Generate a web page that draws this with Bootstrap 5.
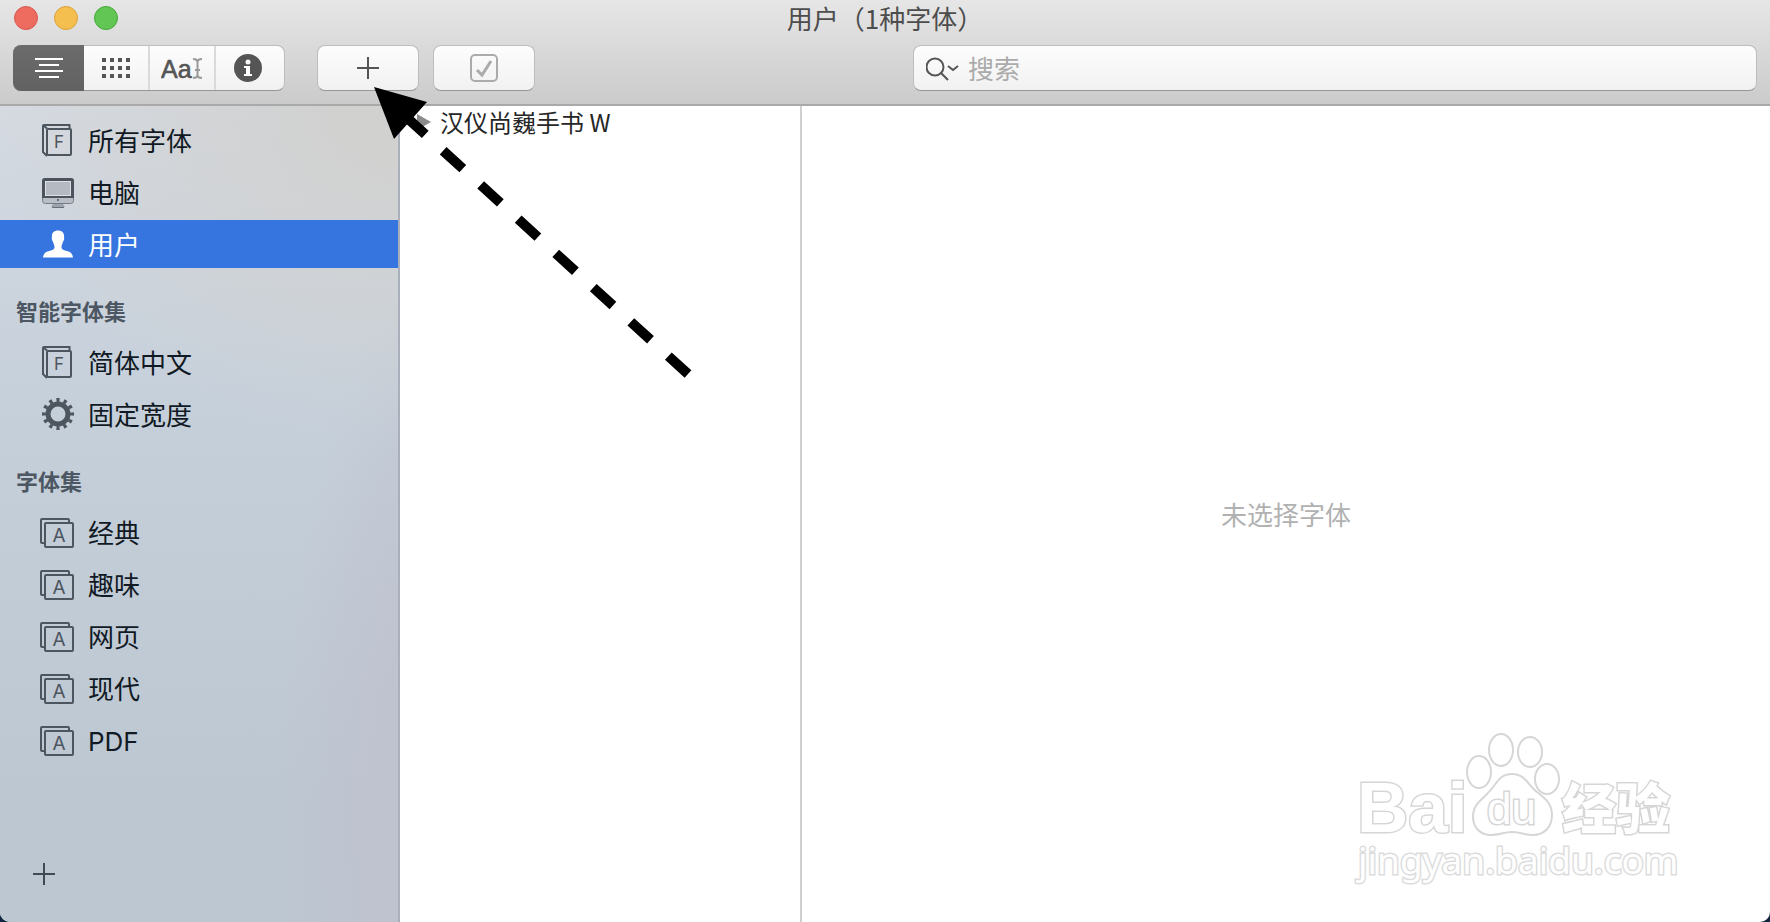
<!DOCTYPE html>
<html lang="zh-CN">
<head>
<meta charset="utf-8">
<meta name="viewport" content="width=device-width, initial-scale=1">
<title>用户（1种字体）</title>
<link href="https://cdn.jsdelivr.net/npm/bootstrap@5.3.0/dist/css/bootstrap.min.css" rel="stylesheet">
<style>
  body { background: #14263f; font-family: Inter, "Noto Sans CJK SC", sans-serif; font-size: 26px; line-height: 36px; color: #14191f; }
  svg { display: block; flex: none; }
  .window { border-radius: 0 0 10px 10px; background: #fff; }
  .titlebar { height: 106px; background: linear-gradient(#e6e6e6, #cbcbcb); border-bottom: 2px solid #a9a9a9; color: #4d4d4d; }
  .titlebar h1 { font-family: "Noto Sans CJK SC", sans-serif; font-size: 26px; line-height: 36px; }
  .lights { left: 14px; top: 6px; gap: 16px; }
  .light { width: 24px; height: 24px; border-radius: 50%; border: 1px solid; }
  .light-close { background: #ed6b5f; border-color: #d9584d; }
  .light-min { background: #f5bf4f; border-color: #dba23a; }
  .light-max { background: #61c654; border-color: #46a83a; }
  .tools { padding: 9px 13px 0; }
  .face { height: 46px; border: 1px solid #bdbdbd; border-bottom-color: #979797; border-radius: 8px; background: linear-gradient(#fdfdfd, #f1f1f1); color: #555; }
  .segments { width: 272px; }
  .segments button, .plain-btn { border: 0; padding: 0; background: none; color: inherit; }
  .segments button { width: 66px; display: flex; align-items: center; justify-content: center; border-left: 2px solid #dadada; }
  .segments button:first-child { width: 71px; margin: -1px 0 -1px -1px; border: 0; border-radius: 8px 0 0 8px; background: linear-gradient(#6b6b6b, #626262); color: #fff; }
  .segments button:nth-child(2) { width: 64px; border: 0; }
  .segments button:last-child { flex: 1; padding-right: 4px; }
  .tool { width: 102px; padding: 0; display: flex; align-items: center; justify-content: center; }
  .add-tool { margin-left: 32px; }
  .check-tool { margin-left: 14px; color: #ababab; }
  .search { margin-left: 378px; padding-left: 12px; }
  .search input { border: 0; outline: 0; background: none; padding: 2px 0 0; margin-left: 8px; height: 38px; min-width: 0; color: #4d4d4d; }
  .search input::placeholder { color: #ababab; opacity: 1; }
  .sidebar { flex: 0 0 400px; border-right: 2px solid #aab0bb; color: #111a24;
    background: radial-gradient(ellipse 100% 42% at 100% 0, #d1d1d0 15%, #d1d1d000), radial-gradient(ellipse 45% 65% at 115% 85%, #bfc1ce 25%, #bfc1ce00), linear-gradient(#d5dae1, #c6d0db 35%, #bdc7d1 85%); }
  .side-list { padding-top: 10px; gap: 4px; }
  .side-list a { height: 48px; padding-left: 40px; gap: 12px; color: inherit; }
  .side-list span, .preview span { padding-top: 3px; }
  .side-list svg { color: #4d555f; }
  .side-list .chosen { background: #3674df; color: #fff; }
  .side-list .chosen svg { color: #fff; }
  .side-head { font-size: 22px; line-height: 32px; font-weight: 700; color: #4c5763; padding: 28px 0 0 16px; margin: 0; }
  .side-add { margin: auto 0 37px 33px; color: #414a54; }
  .fonts { flex: 0 0 402px; border-right: 2px solid #cfcfcf; font-family: "Noto Sans CJK SC", sans-serif; font-size: 24px; line-height: 32px; color: #262626; }
  .fonts li { padding-left: 17px; gap: 9px; }
  .preview { color: #b1b1b1; }
  .pointer { left: 374px; top: 86px; }
  .watermark { right: 90px; bottom: 32px; }
</style>
</head>
<body>
<svg class="d-none" aria-hidden="true">
  <symbol id="book" viewBox="0 0 36 36">
    <path d="M7 34 L3 30 V4 Q3 3 4 3 H29.500 V6 M3.500 3.500 L7 6.500" fill="none" stroke="currentColor" stroke-width="2"/>
    <rect x="7" y="7" width="24" height="26" rx="1" fill="none" stroke="currentColor" stroke-width="2"/>
    <text x="19" y="26" font-size="17" text-anchor="middle" fill="currentColor">F</text>
  </symbol>
  <symbol id="set" viewBox="0 0 36 36">
    <path d="M4 29 H2 Q1 29 1 28 V6 Q1 5 2 5 H28 Q29 5 29 6 V8" fill="none" stroke="currentColor" stroke-width="2"/>
    <rect x="5" y="9" width="28" height="24" rx="1" fill="none" stroke="currentColor" stroke-width="2"/>
    <text x="19" y="28" font-size="19" text-anchor="middle" fill="currentColor">A</text>
  </symbol>
  <symbol id="plus" viewBox="0 0 22 22"><path d="M11 0V22M0 11H22" stroke="currentColor" stroke-width="2"/></symbol>
</svg>

<div class="window min-vh-100 d-flex flex-column position-relative overflow-hidden">
  <header class="titlebar position-relative">
    <div class="lights position-absolute d-flex"><span class="light light-close"></span><span class="light light-min"></span><span class="light light-max"></span></div>
    <h1 class="text-center fw-normal m-0">用户（1种字体）</h1>
    <div class="tools d-flex">
      <div class="face segments d-flex">
        <button type="button" aria-label="列表">
          <svg width="28" height="20" viewBox="0 0 28 20" stroke="currentColor" stroke-width="2"><path d="M0 1H28M4 7H24M0 13H28M4 19H24"/></svg>
        </button>
        <button type="button" aria-label="网格">
          <svg width="28" height="20" viewBox="0 0 28 20" stroke="currentColor" stroke-width="4" stroke-dasharray="4 4"><path d="M0 2H28M0 10H28M0 18H28"/></svg>
        </button>
        <button type="button" aria-label="样本">
          <svg width="42" height="26" viewBox="0 0 42 26"><text x="0" y="23" font-family="Liberation Sans, sans-serif" font-size="25" fill="currentColor" stroke="currentColor" stroke-width=".6">Aa</text><path d="M32 4Q36 4 36.500 6.500Q37 4 41 4M36.500 6V21M32 23Q36 23 36.500 20.500Q37 23 41 23M34 15H39" fill="none" stroke="#9a9a9a" stroke-width="2"/></svg>
        </button>
        <button type="button" aria-label="简介">
          <svg width="28" height="28" viewBox="0 0 28 28"><circle cx="14" cy="14" r="14" fill="currentColor"/><circle cx="14" cy="8" r="2.500" fill="#fff"/><path d="M10 12H16V20H18V22H10V20H12V14H10Z" fill="#fff"/></svg>
        </button>
      </div>
      <button type="button" class="face tool add-tool" aria-label="添加字体"><svg width="22" height="22"><use href="#plus"/></svg></button>
      <button type="button" class="face tool check-tool" aria-label="验证字体">
        <svg width="28" height="28" viewBox="0 0 28 28" fill="none" stroke="currentColor"><rect x="1" y="1" width="26" height="26" rx="4" stroke-width="2"/><path d="M7 16L12 21L21 7" stroke-width="3"/></svg>
      </button>
      <label class="face search d-flex align-items-center flex-grow-1">
        <svg width="34" height="26" viewBox="0 0 34 26" fill="none" stroke="currentColor" stroke-width="2"><circle cx="9" cy="12" r="8.500"/><path d="M15 18L22 25M22 11L27 15L32 11"/></svg>
        <input type="search" class="flex-grow-1" placeholder="搜索" aria-label="搜索">
      </label>
    </div>
  </header>

  <main class="d-flex flex-grow-1">
    <nav class="sidebar d-flex flex-column">
      <div class="side-list d-flex flex-column">
        <a href="#" class="d-flex align-items-center text-decoration-none"><svg width="36" height="36"><use href="#book"/></svg><span>所有字体</span></a>
        <a href="#" class="d-flex align-items-center text-decoration-none">
          <svg width="36" height="36" viewBox="0 0 36 36"><path d="M13 30H23L25 33H11Z" fill="#9da3ac"/><path d="M12 33.500H24" stroke="#666e78"/><rect x="2.500" y="4.500" width="31" height="25" rx="3" fill="#b9bec6" stroke="#747b85"/><path d="M2 24V7Q2 4 5 4H31Q34 4 34 7V24Z" fill="#4d535d"/><rect x="5" y="7" width="26" height="15" fill="#dce0e5"/><rect x="6" y="8" width="24" height="13" fill="#b4b9c2"/><circle cx="18" cy="26" r="1" fill="#4d535d"/></svg><span>电脑</span></a>
        <a href="#" class="chosen d-flex align-items-center text-decoration-none" aria-current="page">
          <svg width="36" height="36" viewBox="0 0 36 36"><path d="M18 4.500C22 4.500 24.500 7 24 11C24.500 12 24 15 23 15.500C22.500 18 21.500 19 21.500 21C21.500 24 24 24 27 25C31 26 32.500 28 33 31.500H3C3.500 28 5 26 9 25C12 24 14.500 24 14.500 21C14.500 19 13.500 18 13 15.500C12 15 11.500 12 12 11C11.500 7 14 4.500 18 4.500Z" fill="currentColor"/></svg><span>用户</span></a>
      </div>
      <h2 class="side-head">智能字体集</h2>
      <div class="side-list d-flex flex-column">
        <a href="#" class="d-flex align-items-center text-decoration-none"><svg width="36" height="36"><use href="#book"/></svg><span>简体中文</span></a>
        <a href="#" class="d-flex align-items-center text-decoration-none">
          <svg width="36" height="36" viewBox="0 0 36 36" fill="none" stroke="currentColor"><circle cx="18" cy="18" r="10" stroke-width="5"/><circle cx="18" cy="18" r="14" stroke-width="4" pathLength="120" stroke-dasharray="4.400 5.600" stroke-dashoffset="2.200"/></svg><span>固定宽度</span></a>
      </div>
      <h2 class="side-head">字体集</h2>
      <div class="side-list d-flex flex-column">
        <a href="#" class="d-flex align-items-center text-decoration-none"><svg width="36" height="36"><use href="#set"/></svg><span>经典</span></a>
        <a href="#" class="d-flex align-items-center text-decoration-none"><svg width="36" height="36"><use href="#set"/></svg><span>趣味</span></a>
        <a href="#" class="d-flex align-items-center text-decoration-none"><svg width="36" height="36"><use href="#set"/></svg><span>网页</span></a>
        <a href="#" class="d-flex align-items-center text-decoration-none"><svg width="36" height="36"><use href="#set"/></svg><span>现代</span></a>
        <a href="#" class="d-flex align-items-center text-decoration-none"><svg width="36" height="36"><use href="#set"/></svg><span>PDF</span></a>
      </div>
      <button type="button" class="plain-btn side-add align-self-start" aria-label="添加字体集"><svg width="22" height="22"><use href="#plus"/></svg></button>
    </nav>
    <ul class="fonts list-unstyled m-0">
      <li class="d-flex align-items-center"><svg width="14" height="16" viewBox="0 0 14 16"><path d="M0 0L14 8L0 16Z" fill="#8b8b8b"/></svg>汉仪尚巍手书 W</li>
    </ul>
    <section class="preview flex-grow-1 d-flex align-items-center justify-content-center"><span>未选择字体</span></section>
  </main>

  <svg class="pointer position-absolute pe-none" width="320" height="294" viewBox="0 0 320 294" aria-hidden="true">
    <path d="M0 1L53 16L20 53Z"/>
    <path d="M314 288L30 29" fill="none" stroke="#000" stroke-width="10" stroke-dasharray="26.600 24.200"/>
  </svg>

  <svg class="watermark position-absolute pe-none" width="330" height="160" viewBox="0 0 330 160" fill="#fff" stroke="#d6d6d6" stroke-width="2">
    <g paint-order="stroke" stroke-width="3" font-weight="700">
      <text x="7" y="102" font-family="Liberation Sans, sans-serif" font-size="71">Bai</text>
      <text x="212" y="99" font-family="Noto Sans CJK SC, sans-serif" font-weight="900" font-size="54">经验</text>
    </g>
    <ellipse cx="129" cy="42" rx="12" ry="16"/>
    <ellipse cx="151" cy="20" rx="12" ry="16"/>
    <ellipse cx="180" cy="22" rx="12" ry="15"/>
    <ellipse cx="197" cy="49" rx="12" ry="15"/>
    <path d="M162 44C176 44 178 56 187 62C196 69 202 74 202 85C202 97 194 105 183 105C174 105 171 102 162 102C153 102 150 105 141 105C130 105 123 97 123 87C123 75 130 71 137 64C146 56 148 44 162 44Z"/>
    <text x="137" y="94" paint-order="stroke" stroke-width="3" font-family="Liberation Sans, sans-serif" font-size="44">du</text>
    <text x="8" y="144" paint-order="stroke" stroke="#dcdcdc" stroke-width="3" font-family="Noto Sans, sans-serif" font-size="37">jingyan.baidu.com</text>
  </svg>
</div>
<script src="https://cdn.jsdelivr.net/npm/bootstrap@5.3.0/dist/js/bootstrap.bundle.min.js"></script>
</body>
</html>
